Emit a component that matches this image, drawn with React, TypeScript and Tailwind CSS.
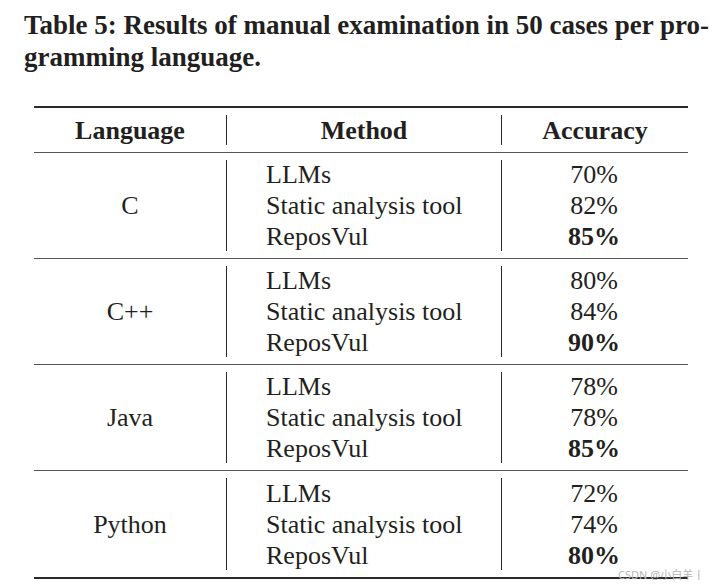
const groups = [
  { lang: 'C', acc: ['70%', '82%', '85%'] },
  { lang: 'C++', acc: ['80%', '84%', '90%'] },
  { lang: 'Java', acc: ['78%', '78%', '85%'] },
  { lang: 'Python', acc: ['72%', '74%', '80%'] },
];

const methods = ['LLMs', 'Static analysis tool', 'ReposVul'];

function Divider() {
  return <div className="w-px self-stretch bg-[#2a2a2a] my-[7px]" />;
}

export default function App() {
  return (
    <div
      className="relative w-[728px] h-[588px] bg-white text-[#231f20] overflow-hidden"
      style={{ fontFamily: '"Liberation Serif", "Times New Roman", serif' }}
    >
      <div className="pl-[24px] pt-[9px] text-[27px] font-bold leading-[32px] whitespace-nowrap">
        <div>Table 5: Results of manual examination in 50 cases per pro-</div>
        <div>gramming language.</div>
      </div>

      <div className="ml-[34px] mt-[33px] w-[654px] border-t-2 border-b-2 border-[#2a2a2a] text-[26px]">
        <div className="flex h-[45px] border-b border-[#555] font-bold">
          <div className="w-[192px] flex items-center justify-center">Language</div>
          <Divider />
          <div className="w-[274px] flex items-center justify-center">Method</div>
          <Divider />
          <div className="flex-1 flex items-center justify-center">Accuracy</div>
        </div>

        {groups.map((g, gi) => (
          <div
            key={g.lang}
            className={
              gi < groups.length - 1
                ? 'flex h-[106px] border-b border-[#555]'
                : 'flex h-[106px]'
            }
          >
            <div className="w-[192px] flex items-center justify-center">{g.lang}</div>
            <Divider />
            <div className="w-[274px] pl-[39px] flex flex-col justify-center leading-[31px]">
              {methods.map((m) => (
                <div key={m}>{m}</div>
              ))}
            </div>
            <Divider />
            <div className="flex-1 flex flex-col justify-center items-center leading-[31px] pr-[2px]">
              {g.acc.map((a, i) => (
                <div key={i} className={i === 2 ? 'font-bold' : ''}>
                  {a}
                </div>
              ))}
            </div>
          </div>
        ))}
      </div>

      <div
        className="absolute left-[618px] top-[567px] text-[11px] text-[#b5b5b5] whitespace-nowrap"
        style={{ fontFamily: '"Noto Sans", "Noto Sans CJK SC", sans-serif' }}
      >
        CSDN @小白羊丨
      </div>
    </div>
  );
}
